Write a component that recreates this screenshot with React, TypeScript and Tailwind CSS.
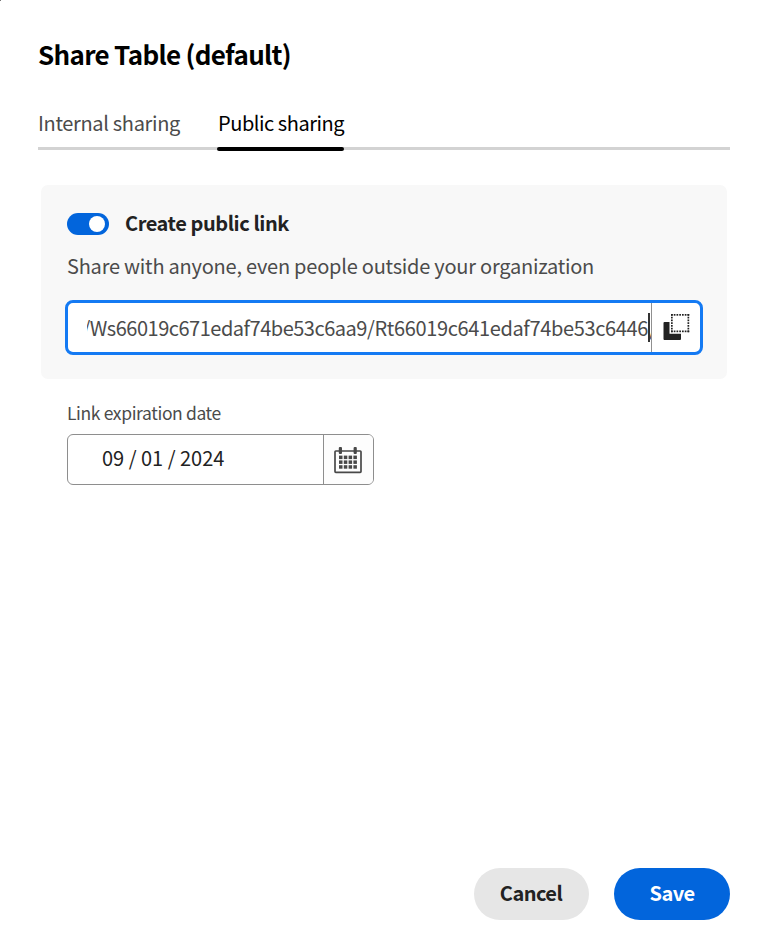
import React from "react";

function CopyIcon() {
  const dots: React.ReactNode[] = [];
  for (let i = 0; i < 7; i++) {
    const p = 8 + i * 2.75;
    const q = i * 2.75;
    dots.push(
      <rect key={`t${i}`} x={p} y={0} width="1.7" height="1.7" />,
      <rect key={`b${i}`} x={p} y={16.5} width="1.7" height="1.7" />,
      <rect key={`l${i}`} x={8} y={q} width="1.7" height="1.7" />,
      <rect key={`r${i}`} x={24.5} y={q} width="1.7" height="1.7" />,
    );
  }
  return (
    <svg width="27" height="27" viewBox="0 0 27 27" fill="#222">
      <path d="M1.5 8H6.5V19.7H18V25a1 1 0 0 1-1 1H1.5a1 1 0 0 1-1-1V9a1 1 0 0 1 1-1Z" />
      {dots}
    </svg>
  );
}

function CalendarIcon() {
  const cells = [0, 1, 2].flatMap((r) =>
    [0, 1, 2, 3].map((c) => (
      <rect key={`${r}-${c}`} x={5 + c * 4.8} y={8.6 + r * 4.8} width="3.5" height="3.5" />
    )),
  );
  return (
    <svg width="28" height="27" viewBox="0 0 28 27" fill="#484848">
      <rect x="1" y="4" width="26" height="21.4" rx="0.8" fill="none" stroke="#484848" strokeWidth="1.7" />
      <rect x="4.8" y="0" width="3.2" height="7" rx="1" />
      <rect x="19.6" y="0" width="3.2" height="7" rx="1" />
      {cells}
    </svg>
  );
}

export default function App() {
  return (
    <div className="relative flex h-[951px] w-[767px] flex-col overflow-hidden bg-white whitespace-nowrap font-['Noto_Sans_CJK_SC','Noto_Sans',sans-serif] text-[20px] text-[#4b4b4b]">
      <span className="absolute top-0 left-0 size-px bg-[#777]" />
      <h1 className="mt-[34px] ml-[38px] h-10 text-[26px] leading-10 font-bold tracking-[-0.69px] text-black">
        Share Table (default)
      </h1>
      <nav className="mr-[37px] ml-[38px] mt-[27px] flex h-[49px] gap-[38px] leading-[42px]">
        <button className="h-[44px] w-[142px] text-left tracking-[-0.33px]">Internal sharing</button>
        <button className="h-[44px] w-[127px] text-left tracking-[-0.46px] text-black">Public sharing</button>
      </nav>
      <div className="mr-[37px] ml-[38px] -mt-[3px] h-[3px] bg-[#d3d3d3]">
        <div className="ml-[179px] h-[4px] w-[127px] rounded-[2px] bg-black" />
      </div>

      <section className="mt-[35px] ml-[41px] h-[194px] w-[686px] rounded-[7px] bg-[#f8f8f8] pt-[23px] pl-[24px]">
        <div className="flex h-[32px] items-center pl-[2px]">
          <div className="flex h-[22px] w-[42px] items-center justify-end rounded-full bg-[#0265dc] pr-[4px]">
            <div className="size-[16px] rounded-full bg-white" />
          </div>
          <span className="mb-[2px] ml-[15px] pl-px font-bold tracking-[-0.44px] text-[#222]">Create public link</span>
        </div>
        <p className="mt-[10px] h-[32px] pl-[2px] leading-[32px] tracking-[-0.23px]">
          Share with anyone, even people outside your organization
        </p>
        <div className="mt-[18px] flex h-[55px] w-[638px] overflow-hidden rounded-[8px] border-[3px] border-[#147af3] bg-white">
          <div className="ml-[19px] flex w-[565px] items-center justify-end overflow-hidden border-r border-[#909090]">
            <span className="tracking-[-0.36px]">
              <span className="tracking-[-0.49px]">/Ws66019c671edaf74be53c6aa9</span>/Rt66019c641edaf74be53c6446
            </span>
            <span className="h-[29px] w-[2px] shrink-0 bg-[#333]" />
            <span className="w-[1px] shrink-0 overflow-hidden">
              <span className="-ml-px">/</span>
            </span>
          </div>
          <button className="flex flex-1 items-center justify-center pl-px">
            <CopyIcon />
          </button>
        </div>
      </section>

      <label className="mt-[20px] ml-[67px] h-[28px] text-[17.5px] leading-[28px] tracking-[-0.38px]">Link expiration date</label>
      <div className="mt-[7px] ml-[67px] flex h-[51px] w-[307px] overflow-hidden rounded-[6px] border border-[#8e8e8e]">
        <div className="w-[256px] border-r border-[#8e8e8e] pl-[34px] leading-[46px] text-[#222]">
          09 / 01 / 2024
        </div>
        <button className="flex flex-1 items-center justify-center bg-[#fdfdfd] pt-px pr-[2px]">
          <CalendarIcon />
        </button>
      </div>

      <footer className="mt-auto mr-[37px] mb-[31px] flex h-[52px] justify-end gap-[25px] font-bold tracking-[-0.55px]">
        <button className="w-[115px] rounded-full bg-[#e6e6e6] pr-px pb-[2px] text-[#222]">Cancel</button>
        <button className="w-[116px] rounded-full bg-[#0265dc] pb-[2px] text-white">Save</button>
      </footer>
    </div>
  );
}
